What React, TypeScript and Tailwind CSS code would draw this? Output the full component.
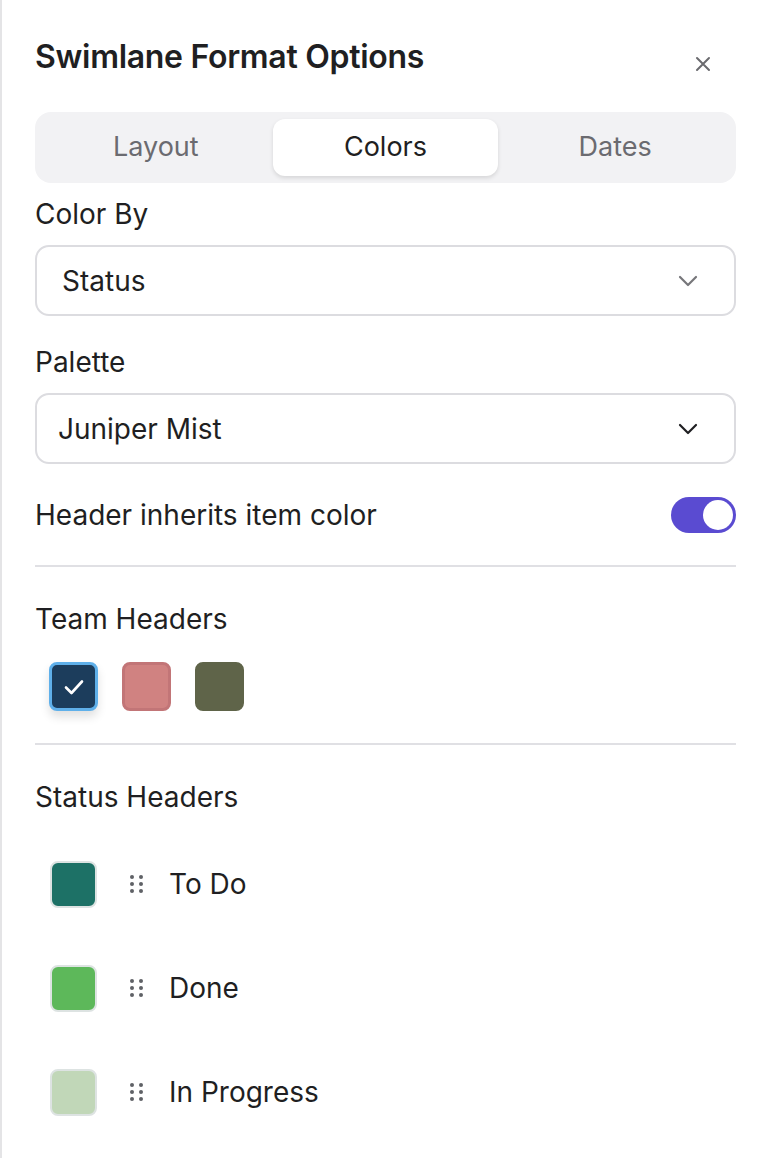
import { useState } from 'react';

const teamColors = [
  { id: 'navy', fill: 'bg-[#1c3d5c]', border: 'border-[#5fb0ea]' },
  { id: 'rose', fill: 'bg-[#d08281]', border: 'border-[#c27577]' },
  { id: 'olive', fill: 'bg-[#5f6449]', border: 'border-[#5f6449]' },
];

const statusRows = [
  { label: 'To Do', fill: 'bg-[#1d7166]' },
  { label: 'Done', fill: 'bg-[#5db85a]' },
  { label: 'In Progress', fill: 'bg-[#c1d7b8]' },
];

export default function App() {
  const [tab, setTab] = useState('Colors');

  return (
    <div
      className="min-h-[1158px] w-[762px] bg-white border-l-2 border-[#e4e4e6] pl-[33px] pr-[26px] text-[#1f1f22]"
      style={{ fontFamily: 'Inter, "Noto Sans", sans-serif' }}
    >
      <div className="flex items-start justify-between pt-[38px]">
        <h2 className="text-[32px] leading-[38px] font-semibold tracking-[-0.3px]">Swimlane Format Options</h2>
        <button className="mt-[10px] mr-[17px] flex h-[32px] w-[32px] items-center justify-center">
          <svg width="16" height="16" viewBox="0 0 16 16" fill="none" stroke="#6b6b6f" strokeWidth="2" strokeLinecap="round">
            <path d="M2 2 L14 14 M14 2 L2 14" />
          </svg>
        </button>
      </div>

      <div className="mt-[32px] grid h-[71px] grid-cols-3 gap-[4px] rounded-[16px] bg-[#f2f2f4] px-[8px] py-[7px]">
        {['Layout', 'Colors', 'Dates'].map((t) => (
          <button
            key={t}
            onClick={() => setTab(t)}
            className={
              t === tab
                ? 'rounded-[12px] bg-white text-[27px] text-[#1f1f22] shadow-[0_2px_4px_rgba(0,0,0,0.12)]'
                : 'rounded-[12px] text-[27px] text-[#6b6b70]'
            }
          >
            {t}
          </button>
        ))}
      </div>

      <Label className="mt-[15px]">Color By</Label>
      <Select className="mt-[15px]" value="Status" muted />

      <Label className="mt-[30px]">Palette</Label>
      <Select className="mt-[15px]" value="Juniper Mist" />

      <div className="mt-[33px] flex h-[36px] items-center justify-between">
        <span className="text-[28px] leading-[32px]">Header inherits item color</span>
        <div className="flex h-[36px] w-[65px] items-center justify-end rounded-full bg-[#5a4bd1] p-[3px]">
          <div className="h-[30px] w-[30px] rounded-full bg-white" />
        </div>
      </div>

      <div className="mt-[32px] h-[2px] bg-[#e0e0e4]" />

      <Label className="mt-[36px]">Team Headers</Label>
      <div className="mt-[27px] flex gap-[24px] pl-[14px]">
        {teamColors.map((c, i) => (
          <div
            key={c.id}
            className={`flex h-[49px] w-[49px] items-center justify-center rounded-[8px] border-[3px] ${c.fill} ${c.border} ${
              i === 0 ? 'shadow-[0_6px_10px_rgba(0,0,0,0.12)]' : ''
            }`}
          >
            {i === 0 && (
              <svg width="24" height="24" viewBox="0 0 24 24" fill="none" stroke="white" strokeWidth="2.6" strokeLinecap="round" strokeLinejoin="round">
                <path d="M4 12.5 L9.5 18 L20 6.5" />
              </svg>
            )}
          </div>
        ))}
      </div>

      <div className="mt-[32px] h-[2px] bg-[#e0e0e4]" />

      <Label className="mt-[36px]">Status Headers</Label>
      <div className="mt-[19px]">
        {statusRows.map((r) => (
          <div key={r.label} className="flex h-[104px] items-center pl-[15px]">
            <div className={`h-[47px] w-[47px] rounded-[8px] border-2 border-[#dde3e2] ${r.fill}`} />
            <DragHandle />
            <span className="ml-[26px] text-[28px] leading-[32px]">{r.label}</span>
          </div>
        ))}
      </div>
    </div>
  );
}

function Label({ children, className }: { children: string; className?: string }) {
  return <div className={`text-[28px] leading-[32px] ${className ?? ''}`}>{children}</div>;
}

function Select({ value, muted, className }: { value: string; muted?: boolean; className?: string }) {
  return (
    <div
      className={`flex h-[71px] items-center justify-between rounded-[14px] border-2 border-[#dcdce0] pr-[36px] ${
        muted ? 'pl-[25px]' : 'pl-[21px]'
      } ${className ?? ''}`}
    >
      <span className="text-[28px]">{value}</span>
      <svg width="20" height="12" viewBox="0 0 20 12" fill="none" stroke={muted ? '#76767a' : '#1f1f22'} strokeWidth="2.2" strokeLinecap="round" strokeLinejoin="round">
        <path d="M2 2 L10 10 L18 2" />
      </svg>
    </div>
  );
}

function DragHandle() {
  return (
    <div className="ml-[33px] grid grid-cols-2 gap-x-[5px] gap-y-[3px]">
      {[0, 1, 2, 3, 4, 5].map((i) => (
        <span key={i} className="h-[4px] w-[4px] rounded-full bg-[#5f6166]" />
      ))}
    </div>
  );
}
